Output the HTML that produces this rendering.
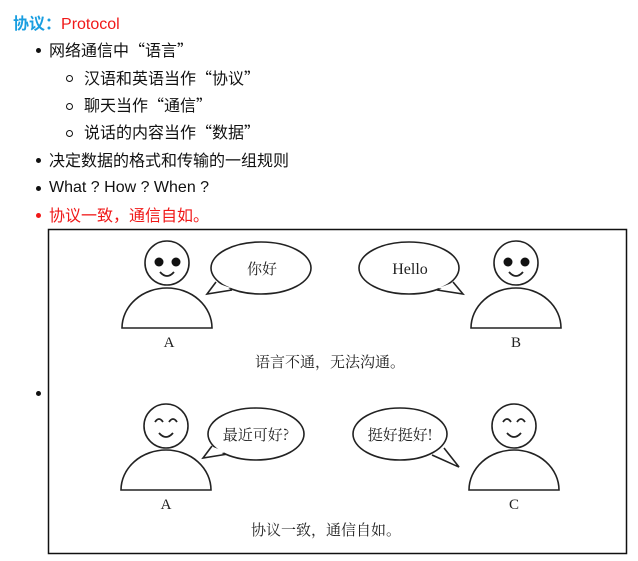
<!DOCTYPE html>
<html><head><meta charset="utf-8"><style>
body{margin:0;width:638px;height:561px;background:#fff;font-family:"Liberation Sans","Noto Sans CJK SC",sans-serif;overflow:hidden;position:relative}
.t{position:absolute;font-size:16px;color:#111;white-space:nowrap;line-height:20px}
.c{font-family:"Noto Sans CJK SC","Liberation Sans",sans-serif}
.dot{position:absolute;width:5px;height:5px;border-radius:50%;background:#111}
.cir{position:absolute;width:7px;height:7px;border-radius:50%;border:1.3px solid #111;box-sizing:border-box}
svg text{font-family:"Noto Serif CJK SC","Liberation Serif",serif;fill:#222}
</style></head><body>
<div class="t c" style="left:13px;top:12px;font-size:16px"><b style="color:#1a9ee0">协议：</b><span style="color:#f01818;font-family:'Liberation Sans',sans-serif">Protocol</span></div>
<div class="dot" style="left:36px;top:48px"></div><div class="t c" style="left:49px;top:39px">网络通信中“语言”</div>
<div class="cir" style="left:66px;top:75px"></div><div class="t c" style="left:84px;top:67px">汉语和英语当作“协议”</div>
<div class="cir" style="left:66px;top:103px"></div><div class="t c" style="left:84px;top:94px">聊天当作“通信”</div>
<div class="cir" style="left:66px;top:130px"></div><div class="t c" style="left:84px;top:121px">说话的内容当作“数据”</div>
<div class="dot" style="left:36px;top:158px"></div><div class="t c" style="left:49px;top:149px">决定数据的格式和传输的一组规则</div>
<div class="dot" style="left:36px;top:186px"></div><div class="t" style="left:49px;top:178px">What ? How ? When ?</div>
<div class="dot" style="left:36px;top:213px;background:#f01818"></div><div class="t c" style="left:49px;top:204px;color:#f01818">协议一致，通信自如。</div>
<div class="dot" style="left:36px;top:391px"></div>
<svg style="position:absolute;left:0;top:0" width="638" height="561">
<rect x="48.5" y="229.5" width="578" height="324" fill="#fff" stroke="#111" stroke-width="1.5"/>
<g stroke="#222" stroke-width="1.6" fill="#fff">
<path d="M122 328 A45 40 0 0 1 212 328 Z"/><circle cx="167" cy="263" r="22"/>
<path d="M471 328 A45 40 0 0 1 561 328 Z"/><circle cx="516" cy="263" r="22"/>
<path d="M121 490 A45 40 0 0 1 211 490 Z"/><circle cx="166" cy="426" r="22"/>
<path d="M469 490 A45 40 0 0 1 559 490 Z"/><circle cx="514" cy="426" r="22"/>
<path d="M216 282 L207 294 L232 290"/><ellipse cx="261" cy="268" rx="50" ry="26"/>
<path d="M453 282 L463 294 L437 290"/><ellipse cx="409" cy="268" rx="50" ry="26"/>
<path d="M212 446 L203 458 L228 454"/><ellipse cx="256" cy="434" rx="48" ry="26"/>
<path d="M444 448 L459 467 L432 455"/><ellipse cx="400" cy="434" rx="47" ry="26"/>
</g>
<g fill="#fff">
<path d="M217 283 L210 292 L231 288 L225 286Z"/>
<path d="M452 283 L460 292 L438 288 L444 286Z"/>
<path d="M213 447 L206 456 L227 452 L221 450Z"/>
<path d="M443 449 L456 465 L433 454 L437 452Z"/>
</g>
<g fill="#111"><circle cx="159" cy="262" r="4.5"/><circle cx="176" cy="262" r="4.5"/><circle cx="508" cy="262" r="4.5"/><circle cx="525" cy="262" r="4.5"/></g>
<g stroke="#222" stroke-width="1.8" fill="none">
<path d="M160 272 Q167 280 174 272"/><path d="M509 272 Q516 280 523 272"/>
<path d="M159 433 Q166 441 173 433"/><path d="M507 433 Q514 441 521 433"/>
<path d="M155 422 Q159 416 163 422 M169 422 Q173 416 177 422"/>
<path d="M503 422 Q507 416 511 422 M517 422 Q521 416 525 422"/>
</g>
<g font-size="15" text-anchor="middle">
<text x="262" y="274">你好</text><text x="410" y="274" font-size="16" style="font-family:'Liberation Serif',serif">Hello</text>
<text x="256" y="440">最近可好?</text><text x="400" y="440">挺好挺好!</text>
<text x="169" y="347" style="font-family:'Liberation Serif',serif">A</text><text x="516" y="347" style="font-family:'Liberation Serif',serif">B</text>
<text x="166" y="509" style="font-family:'Liberation Serif',serif">A</text><text x="514" y="509" style="font-family:'Liberation Serif',serif">C</text>
<text x="330" y="367">语言不通，无法沟通。</text><text x="326" y="535">协议一致，通信自如。</text>
</g>
</svg>
</body></html>
